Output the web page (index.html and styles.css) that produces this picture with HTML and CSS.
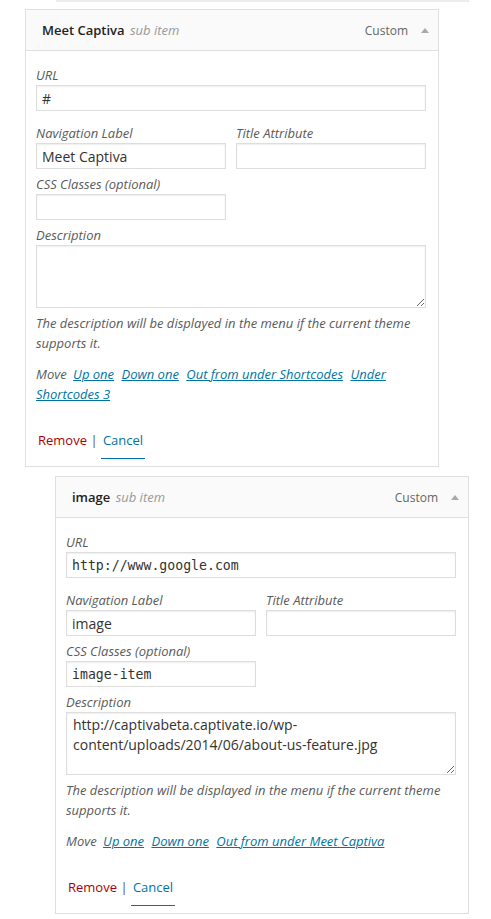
FILE: index.html
```html
<!DOCTYPE html>
<html>
<head>
<meta charset="utf-8">
<link rel="stylesheet" href="styles.css">
</head>
<body>
<div class="prev-edge"></div>
<ul class="menu">
  <li class="item depth-1">
    <div class="handle">
      <span class="item-title">Meet Captiva <span class="is-submenu">sub item</span></span>
      <span class="item-controls"><span class="item-type">Custom</span><span class="item-edit"></span></span>
    </div>
    <div class="settings">
      <div class="field wide url">
        <label class="desc">URL</label>
        <input class="text" type="text" value="#">
      </div>
      <div class="row">
        <div class="field thin">
          <label class="desc">Navigation Label</label>
          <input class="text" type="text" value="Meet Captiva">
        </div>
        <div class="field thin">
          <label class="desc">Title Attribute</label>
          <input class="text" type="text" value="">
        </div>
      </div>
      <div class="field thin">
        <label class="desc">CSS Classes (optional)</label>
        <input class="text" type="text" value="">
      </div>
      <div class="field wide last">
        <label class="desc">Description</label>
        <textarea class="text area"></textarea>
      </div>
      <p class="help">The description will be displayed in the menu if the current theme supports it.</p>
      <p class="move"><span class="move-label">Move</span> <a href="#" class="mv">Up one</a> <a href="#" class="mv">Down one</a> <a href="#" class="mv">Out from under Shortcodes</a> <a href="#" class="mv">Under Shortcodes 3</a></p>
      <div class="actions"><a href="#" class="remove">Remove</a> <span class="sep">|</span> <a href="#" class="cancel">Cancel</a></div>
    </div>
  </li>
  <li class="item depth-2">
    <div class="handle">
      <span class="item-title">image <span class="is-submenu">sub item</span></span>
      <span class="item-controls"><span class="item-type">Custom</span><span class="item-edit"></span></span>
    </div>
    <div class="settings">
      <div class="field wide url">
        <label class="desc">URL</label>
        <input class="text code" type="text" value="http://www.google.com">
      </div>
      <div class="row">
        <div class="field thin">
          <label class="desc">Navigation Label</label>
          <input class="text" type="text" value="image">
        </div>
        <div class="field thin">
          <label class="desc">Title Attribute</label>
          <input class="text" type="text" value="">
        </div>
      </div>
      <div class="field thin">
        <label class="desc">CSS Classes (optional)</label>
        <input class="text code" type="text" value="image-item">
      </div>
      <div class="field wide last">
        <label class="desc">Description</label>
        <textarea class="text area">http://captivabeta.captivate.io/wp-content/uploads/2014/06/about-us-feature.jpg</textarea>
      </div>
      <p class="help">The description will be displayed in the menu if the current theme supports it.</p>
      <p class="move"><span class="move-label">Move</span> <a href="#" class="mv">Up one</a> <a href="#" class="mv">Down one</a> <a href="#" class="mv">Out from under Meet Captiva</a></p>
      <div class="actions"><a href="#" class="remove">Remove</a> <span class="sep">|</span> <a href="#" class="cancel">Cancel</a></div>
    </div>
  </li>
</ul>
</body>
</html>
```
FILE: styles.css
```css
* { box-sizing: border-box; }
body {
  margin: 0;
  background: #fff;
  font-family: "Open Sans", "Liberation Sans", sans-serif;
  font-size: 13px;
  color: #444;
}
.prev-edge {
  margin-left: 56px;
  width: 413px;
  height: 2px;
  background: #ececec;
}
.menu {
  list-style: none;
  margin: 7px 0 0;
  padding: 0;
}
.item {
  width: 414px;
  margin: 0 0 9px 25px;
}
.item.depth-2 { margin-left: 55px; }
.handle {
  height: 42px;
  border: 1px solid #dfdfdf;
  background: #fafafa;
  display: flex;
  align-items: center;
  justify-content: space-between;
  padding: 0 9px 0 16px;
}
.item-title {
  font-weight: 600;
  color: #222;
  line-height: 20px;
}
.is-submenu {
  font-weight: 400;
  font-style: italic;
  color: #999;
  margin-left: 2px;
}
.item-controls {
  display: flex;
  align-items: center;
}
.item-type {
  font-size: 12px;
  color: #666;
}
.item-edit {
  width: 0;
  height: 0;
  border-left: 4px solid transparent;
  border-right: 4px solid transparent;
  border-bottom: 5px solid #aaa;
  margin-left: 13px;
}
.settings {
  border: 1px solid #dfdfdf;
  border-top: 0;
  padding: 15px 0 7px 10px;
}
.field { width: 390px; margin-bottom: 6px; }
.field.thin { width: 190px; }
.field.url { margin-bottom: 13px; }
.field.last { margin-bottom: 0; }
.row {
  display: flex;
  gap: 10px;
}
.desc {
  display: block;
  font-style: italic;
  color: #5a5a5a;
  line-height: 18px;
  margin-bottom: 1px;
}
.text {
  display: block;
  width: 100%;
  height: 26px;
  margin: 0;
  border: 1px solid #ddd;
  box-shadow: inset 0 1px 2px rgba(0,0,0,0.07);
  background: #fff;
  padding: 0 5px;
  font-family: "Open Sans", "Liberation Sans", sans-serif;
  font-size: 14px;
  color: #333;
  outline: none;
  border-radius: 0;
}
.text.code {
  font-family: "DejaVu Sans Mono", monospace;
  font-size: 13.2px;
}
.text.area {
  height: 63px;
  padding: 2px 6px;
  line-height: 1.4;
  resize: vertical;
}
.help, .move {
  width: 390px;
  margin: 5px 0 0;
  font-style: italic;
  color: #5a5a5a;
  line-height: 20px;
}
.move { margin-top: 11px; }
.move-label { margin-right: 1px; }
.mv {
  color: #0074a2;
  margin: 0 2px;
  text-decoration: underline;
}
.actions {
  margin-top: 26px;
  line-height: 20px;
}
.remove {
  color: #a00;
  text-decoration: none;
  padding: 0 0 0 2px;
}
.sep { color: #555; }
.cancel {
  display: inline-block;
  color: #0074a2;
  text-decoration: none;
  padding: 0 2px 8px;
  border-bottom: 1px solid #0074a2;
  line-height: 20px;
}
```
